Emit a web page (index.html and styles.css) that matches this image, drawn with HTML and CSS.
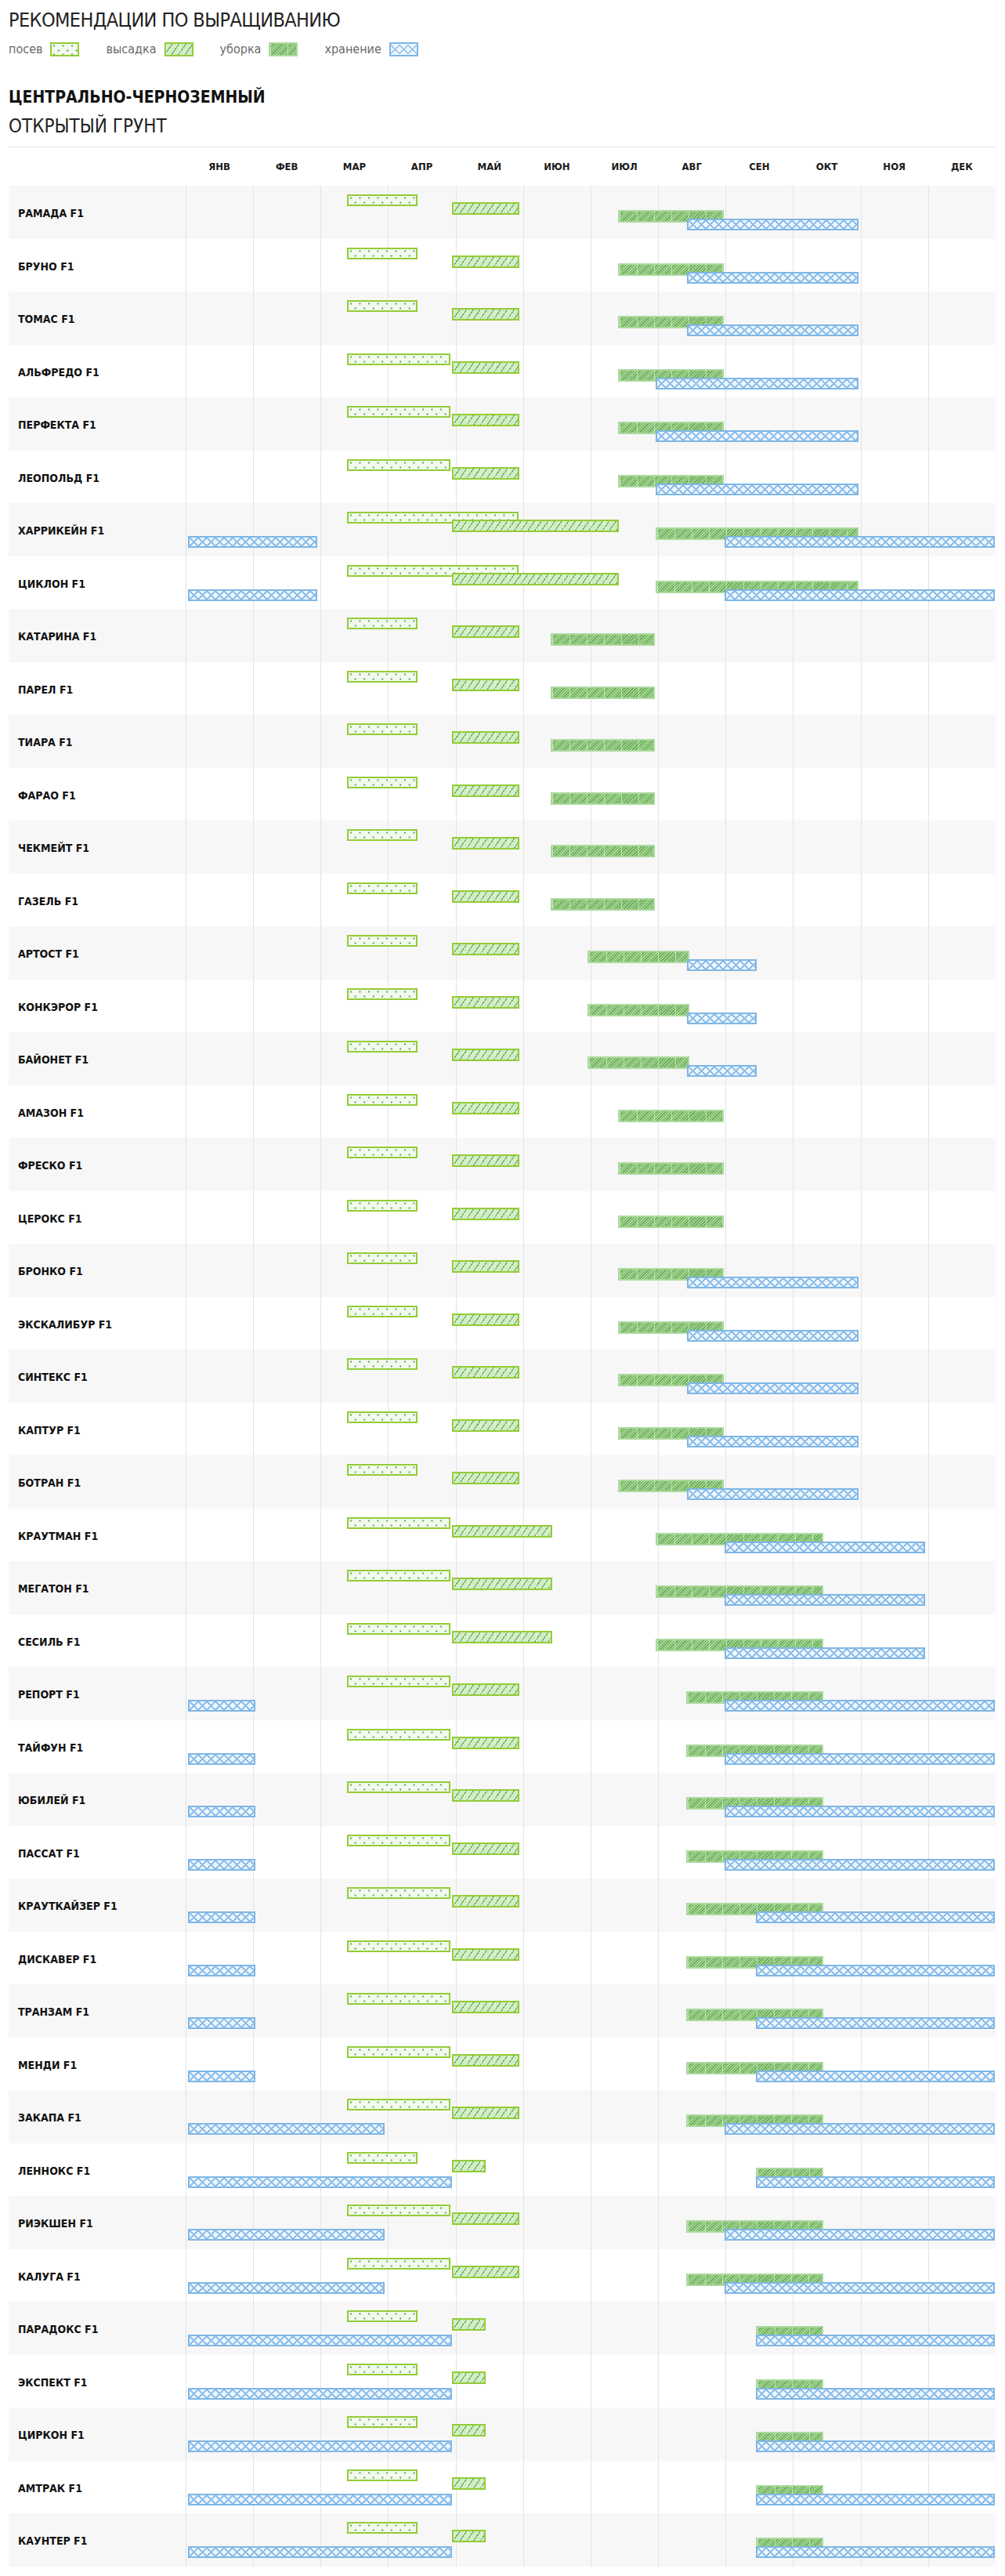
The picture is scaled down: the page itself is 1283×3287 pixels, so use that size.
FILE: index.html
```html
<!DOCTYPE html>
<html lang="ru">
<head>
<meta charset="utf-8">
<title>Рекомендации по выращиванию</title>
<link rel="stylesheet" href="styles.css">
</head>
<body>
<div class="page">
  <h1 class="title">РЕКОМЕНДАЦИИ ПО ВЫРАЩИВАНИЮ</h1>
  <div class="legend">
    <div class="legend-item"><span>посев</span><i class="swatch sow"></i></div>
    <div class="legend-item"><span>высадка</span><i class="swatch plant"></i></div>
    <div class="legend-item"><span>уборка</span><i class="swatch harvest"></i></div>
    <div class="legend-item"><span>хранение</span><i class="swatch store"></i></div>
  </div>
  <h2 class="region">ЦЕНТРАЛЬНО-ЧЕРНОЗЕМНЫЙ</h2>
  <h3 class="ground">ОТКРЫТЫЙ ГРУНТ</h3>
  <div class="divider"></div>

  <div class="months">
    <div class="spacer"></div>
    <div>ЯНВ</div><div>ФЕВ</div><div>МАР</div><div>АПР</div><div>МАЙ</div><div>ИЮН</div>
    <div>ИЮЛ</div><div>АВГ</div><div>СЕН</div><div>ОКТ</div><div>НОЯ</div><div>ДЕК</div>
  </div>

  <div class="chart">
    <div class="gridlines"><i></i><i></i><i></i><i></i><i></i><i></i><i></i><i></i><i></i><i></i><i></i><i></i></div>

    <div class="row"><div class="name">РАМАДА F1</div><div class="track">
      <b class="bar sow" style="left:19.95%;width:8.65%"></b>
      <b class="bar plant" style="left:32.91%;width:8.26%"></b>
      <b class="bar harvest" style="left:53.38%;width:13.06%"></b>
      <b class="bar store" style="left:61.9%;width:21.15%"></b>
    </div></div>
    <div class="row"><div class="name">БРУНО F1</div><div class="track">
      <b class="bar sow" style="left:19.95%;width:8.65%"></b>
      <b class="bar plant" style="left:32.91%;width:8.26%"></b>
      <b class="bar harvest" style="left:53.38%;width:13.06%"></b>
      <b class="bar store" style="left:61.9%;width:21.15%"></b>
    </div></div>
    <div class="row"><div class="name">ТОМАС F1</div><div class="track">
      <b class="bar sow" style="left:19.95%;width:8.65%"></b>
      <b class="bar plant" style="left:32.91%;width:8.26%"></b>
      <b class="bar harvest" style="left:53.38%;width:13.06%"></b>
      <b class="bar store" style="left:61.9%;width:21.15%"></b>
    </div></div>
    <div class="row"><div class="name">АЛЬФРЕДО F1</div><div class="track">
      <b class="bar sow" style="left:19.95%;width:12.72%"></b>
      <b class="bar plant" style="left:32.91%;width:8.26%"></b>
      <b class="bar harvest" style="left:53.38%;width:13.06%"></b>
      <b class="bar store" style="left:58%;width:25.05%"></b>
    </div></div>
    <div class="row"><div class="name">ПЕРФЕКТА F1</div><div class="track">
      <b class="bar sow" style="left:19.95%;width:12.72%"></b>
      <b class="bar plant" style="left:32.91%;width:8.26%"></b>
      <b class="bar harvest" style="left:53.38%;width:13.06%"></b>
      <b class="bar store" style="left:58%;width:25.05%"></b>
    </div></div>
    <div class="row"><div class="name">ЛЕОПОЛЬД F1</div><div class="track">
      <b class="bar sow" style="left:19.95%;width:12.72%"></b>
      <b class="bar plant" style="left:32.91%;width:8.26%"></b>
      <b class="bar harvest" style="left:53.38%;width:13.06%"></b>
      <b class="bar store" style="left:58%;width:25.05%"></b>
    </div></div>
    <div class="row"><div class="name">ХАРРИКЕЙН F1</div><div class="track">
      <b class="bar sow" style="left:19.95%;width:21.2%"></b>
      <b class="bar plant" style="left:32.91%;width:20.6%"></b>
      <b class="bar harvest" style="left:58%;width:25.05%"></b>
      <b class="bar store" style="left:0.33%;width:15.92%"></b>
      <b class="bar store" style="left:66.5%;width:33.4%"></b>
    </div></div>
    <div class="row"><div class="name">ЦИКЛОН F1</div><div class="track">
      <b class="bar sow" style="left:19.95%;width:21.2%"></b>
      <b class="bar plant" style="left:32.91%;width:20.6%"></b>
      <b class="bar harvest" style="left:58%;width:25.05%"></b>
      <b class="bar store" style="left:0.33%;width:15.92%"></b>
      <b class="bar store" style="left:66.5%;width:33.4%"></b>
    </div></div>
    <div class="row"><div class="name">КАТАРИНА F1</div><div class="track">
      <b class="bar sow" style="left:19.95%;width:8.65%"></b>
      <b class="bar plant" style="left:32.91%;width:8.26%"></b>
      <b class="bar harvest" style="left:45.08%;width:12.83%"></b>
    </div></div>
    <div class="row"><div class="name">ПАРЕЛ F1</div><div class="track">
      <b class="bar sow" style="left:19.95%;width:8.65%"></b>
      <b class="bar plant" style="left:32.91%;width:8.26%"></b>
      <b class="bar harvest" style="left:45.08%;width:12.83%"></b>
    </div></div>
    <div class="row"><div class="name">ТИАРА F1</div><div class="track">
      <b class="bar sow" style="left:19.95%;width:8.65%"></b>
      <b class="bar plant" style="left:32.91%;width:8.26%"></b>
      <b class="bar harvest" style="left:45.08%;width:12.83%"></b>
    </div></div>
    <div class="row"><div class="name">ФАРАО F1</div><div class="track">
      <b class="bar sow" style="left:19.95%;width:8.65%"></b>
      <b class="bar plant" style="left:32.91%;width:8.26%"></b>
      <b class="bar harvest" style="left:45.08%;width:12.83%"></b>
    </div></div>
    <div class="row"><div class="name">ЧЕКМЕЙТ F1</div><div class="track">
      <b class="bar sow" style="left:19.95%;width:8.65%"></b>
      <b class="bar plant" style="left:32.91%;width:8.26%"></b>
      <b class="bar harvest" style="left:45.08%;width:12.83%"></b>
    </div></div>
    <div class="row"><div class="name">ГАЗЕЛЬ F1</div><div class="track">
      <b class="bar sow" style="left:19.95%;width:8.65%"></b>
      <b class="bar plant" style="left:32.91%;width:8.26%"></b>
      <b class="bar harvest" style="left:45.08%;width:12.83%"></b>
    </div></div>
    <div class="row"><div class="name">АРТОСТ F1</div><div class="track">
      <b class="bar sow" style="left:19.95%;width:8.65%"></b>
      <b class="bar plant" style="left:32.91%;width:8.26%"></b>
      <b class="bar harvest" style="left:49.58%;width:12.58%"></b>
      <b class="bar store" style="left:61.9%;width:8.6%"></b>
    </div></div>
    <div class="row"><div class="name">КОНКЭРОР F1</div><div class="track">
      <b class="bar sow" style="left:19.95%;width:8.65%"></b>
      <b class="bar plant" style="left:32.91%;width:8.26%"></b>
      <b class="bar harvest" style="left:49.58%;width:12.58%"></b>
      <b class="bar store" style="left:61.9%;width:8.6%"></b>
    </div></div>
    <div class="row"><div class="name">БАЙОНЕТ F1</div><div class="track">
      <b class="bar sow" style="left:19.95%;width:8.65%"></b>
      <b class="bar plant" style="left:32.91%;width:8.26%"></b>
      <b class="bar harvest" style="left:49.58%;width:12.58%"></b>
      <b class="bar store" style="left:61.9%;width:8.6%"></b>
    </div></div>
    <div class="row"><div class="name">АМАЗОН F1</div><div class="track">
      <b class="bar sow" style="left:19.95%;width:8.65%"></b>
      <b class="bar plant" style="left:32.91%;width:8.26%"></b>
      <b class="bar harvest" style="left:53.38%;width:13.06%"></b>
    </div></div>
    <div class="row"><div class="name">ФРЕСКО F1</div><div class="track">
      <b class="bar sow" style="left:19.95%;width:8.65%"></b>
      <b class="bar plant" style="left:32.91%;width:8.26%"></b>
      <b class="bar harvest" style="left:53.38%;width:13.06%"></b>
    </div></div>
    <div class="row"><div class="name">ЦЕРОКС F1</div><div class="track">
      <b class="bar sow" style="left:19.95%;width:8.65%"></b>
      <b class="bar plant" style="left:32.91%;width:8.26%"></b>
      <b class="bar harvest" style="left:53.38%;width:13.06%"></b>
    </div></div>
    <div class="row"><div class="name">БРОНКО F1</div><div class="track">
      <b class="bar sow" style="left:19.95%;width:8.65%"></b>
      <b class="bar plant" style="left:32.91%;width:8.26%"></b>
      <b class="bar harvest" style="left:53.38%;width:13.06%"></b>
      <b class="bar store" style="left:61.9%;width:21.15%"></b>
    </div></div>
    <div class="row"><div class="name">ЭКСКАЛИБУР F1</div><div class="track">
      <b class="bar sow" style="left:19.95%;width:8.65%"></b>
      <b class="bar plant" style="left:32.91%;width:8.26%"></b>
      <b class="bar harvest" style="left:53.38%;width:13.06%"></b>
      <b class="bar store" style="left:61.9%;width:21.15%"></b>
    </div></div>
    <div class="row"><div class="name">СИНТЕКС F1</div><div class="track">
      <b class="bar sow" style="left:19.95%;width:8.65%"></b>
      <b class="bar plant" style="left:32.91%;width:8.26%"></b>
      <b class="bar harvest" style="left:53.38%;width:13.06%"></b>
      <b class="bar store" style="left:61.9%;width:21.15%"></b>
    </div></div>
    <div class="row"><div class="name">КАПТУР F1</div><div class="track">
      <b class="bar sow" style="left:19.95%;width:8.65%"></b>
      <b class="bar plant" style="left:32.91%;width:8.26%"></b>
      <b class="bar harvest" style="left:53.38%;width:13.06%"></b>
      <b class="bar store" style="left:61.9%;width:21.15%"></b>
    </div></div>
    <div class="row"><div class="name">БОТРАН F1</div><div class="track">
      <b class="bar sow" style="left:19.95%;width:8.65%"></b>
      <b class="bar plant" style="left:32.91%;width:8.26%"></b>
      <b class="bar harvest" style="left:53.38%;width:13.06%"></b>
      <b class="bar store" style="left:61.9%;width:21.15%"></b>
    </div></div>
    <div class="row"><div class="name">КРАУТМАН F1</div><div class="track">
      <b class="bar sow" style="left:19.95%;width:12.72%"></b>
      <b class="bar plant" style="left:32.91%;width:12.4%"></b>
      <b class="bar harvest" style="left:58%;width:20.75%"></b>
      <b class="bar store" style="left:66.5%;width:24.83%"></b>
    </div></div>
    <div class="row"><div class="name">МЕГАТОН F1</div><div class="track">
      <b class="bar sow" style="left:19.95%;width:12.72%"></b>
      <b class="bar plant" style="left:32.91%;width:12.4%"></b>
      <b class="bar harvest" style="left:58%;width:20.75%"></b>
      <b class="bar store" style="left:66.5%;width:24.83%"></b>
    </div></div>
    <div class="row"><div class="name">СЕСИЛЬ F1</div><div class="track">
      <b class="bar sow" style="left:19.95%;width:12.72%"></b>
      <b class="bar plant" style="left:32.91%;width:12.4%"></b>
      <b class="bar harvest" style="left:58%;width:20.75%"></b>
      <b class="bar store" style="left:66.5%;width:24.83%"></b>
    </div></div>
    <div class="row"><div class="name">РЕПОРТ F1</div><div class="track">
      <b class="bar sow" style="left:19.95%;width:12.72%"></b>
      <b class="bar plant" style="left:32.91%;width:8.26%"></b>
      <b class="bar harvest" style="left:61.83%;width:16.92%"></b>
      <b class="bar store" style="left:0.33%;width:8.25%"></b>
      <b class="bar store" style="left:66.5%;width:33.4%"></b>
    </div></div>
    <div class="row"><div class="name">ТАЙФУН F1</div><div class="track">
      <b class="bar sow" style="left:19.95%;width:12.72%"></b>
      <b class="bar plant" style="left:32.91%;width:8.26%"></b>
      <b class="bar harvest" style="left:61.83%;width:16.92%"></b>
      <b class="bar store" style="left:0.33%;width:8.25%"></b>
      <b class="bar store" style="left:66.5%;width:33.4%"></b>
    </div></div>
    <div class="row"><div class="name">ЮБИЛЕЙ F1</div><div class="track">
      <b class="bar sow" style="left:19.95%;width:12.72%"></b>
      <b class="bar plant" style="left:32.91%;width:8.26%"></b>
      <b class="bar harvest" style="left:61.83%;width:16.92%"></b>
      <b class="bar store" style="left:0.33%;width:8.25%"></b>
      <b class="bar store" style="left:66.5%;width:33.4%"></b>
    </div></div>
    <div class="row"><div class="name">ПАССАТ F1</div><div class="track">
      <b class="bar sow" style="left:19.95%;width:12.72%"></b>
      <b class="bar plant" style="left:32.91%;width:8.26%"></b>
      <b class="bar harvest" style="left:61.83%;width:16.92%"></b>
      <b class="bar store" style="left:0.33%;width:8.25%"></b>
      <b class="bar store" style="left:66.5%;width:33.4%"></b>
    </div></div>
    <div class="row"><div class="name">КРАУТКАЙЗЕР F1</div><div class="track">
      <b class="bar sow" style="left:19.95%;width:12.72%"></b>
      <b class="bar plant" style="left:32.91%;width:8.26%"></b>
      <b class="bar harvest" style="left:61.83%;width:16.92%"></b>
      <b class="bar store" style="left:0.33%;width:8.25%"></b>
      <b class="bar store" style="left:70.4%;width:29.5%"></b>
    </div></div>
    <div class="row"><div class="name">ДИСКАВЕР F1</div><div class="track">
      <b class="bar sow" style="left:19.95%;width:12.72%"></b>
      <b class="bar plant" style="left:32.91%;width:8.26%"></b>
      <b class="bar harvest" style="left:61.83%;width:16.92%"></b>
      <b class="bar store" style="left:0.33%;width:8.25%"></b>
      <b class="bar store" style="left:70.4%;width:29.5%"></b>
    </div></div>
    <div class="row"><div class="name">ТРАНЗАМ F1</div><div class="track">
      <b class="bar sow" style="left:19.95%;width:12.72%"></b>
      <b class="bar plant" style="left:32.91%;width:8.26%"></b>
      <b class="bar harvest" style="left:61.83%;width:16.92%"></b>
      <b class="bar store" style="left:0.33%;width:8.25%"></b>
      <b class="bar store" style="left:70.4%;width:29.5%"></b>
    </div></div>
    <div class="row"><div class="name">МЕНДИ F1</div><div class="track">
      <b class="bar sow" style="left:19.95%;width:12.72%"></b>
      <b class="bar plant" style="left:32.91%;width:8.26%"></b>
      <b class="bar harvest" style="left:61.83%;width:16.92%"></b>
      <b class="bar store" style="left:0.33%;width:8.25%"></b>
      <b class="bar store" style="left:70.4%;width:29.5%"></b>
    </div></div>
    <div class="row"><div class="name">ЗАКАПА F1</div><div class="track">
      <b class="bar sow" style="left:19.95%;width:12.72%"></b>
      <b class="bar plant" style="left:32.91%;width:8.26%"></b>
      <b class="bar harvest" style="left:61.83%;width:16.92%"></b>
      <b class="bar store" style="left:0.33%;width:24.25%"></b>
      <b class="bar store" style="left:66.5%;width:33.4%"></b>
    </div></div>
    <div class="row"><div class="name">ЛЕННОКС F1</div><div class="track">
      <b class="bar sow" style="left:19.95%;width:8.65%"></b>
      <b class="bar plant" style="left:32.91%;width:4.1%"></b>
      <b class="bar harvest" style="left:70.4%;width:8.35%"></b>
      <b class="bar store" style="left:0.33%;width:32.58%"></b>
      <b class="bar store" style="left:70.4%;width:29.5%"></b>
    </div></div>
    <div class="row"><div class="name">РИЭКШЕН F1</div><div class="track">
      <b class="bar sow" style="left:19.95%;width:12.72%"></b>
      <b class="bar plant" style="left:32.91%;width:8.26%"></b>
      <b class="bar harvest" style="left:61.83%;width:16.92%"></b>
      <b class="bar store" style="left:0.33%;width:24.25%"></b>
      <b class="bar store" style="left:66.5%;width:33.4%"></b>
    </div></div>
    <div class="row"><div class="name">КАЛУГА F1</div><div class="track">
      <b class="bar sow" style="left:19.95%;width:12.72%"></b>
      <b class="bar plant" style="left:32.91%;width:8.26%"></b>
      <b class="bar harvest" style="left:61.83%;width:16.92%"></b>
      <b class="bar store" style="left:0.33%;width:24.25%"></b>
      <b class="bar store" style="left:66.5%;width:33.4%"></b>
    </div></div>
    <div class="row"><div class="name">ПАРАДОКС F1</div><div class="track">
      <b class="bar sow" style="left:19.95%;width:8.65%"></b>
      <b class="bar plant" style="left:32.91%;width:4.1%"></b>
      <b class="bar harvest" style="left:70.4%;width:8.35%"></b>
      <b class="bar store" style="left:0.33%;width:32.58%"></b>
      <b class="bar store" style="left:70.4%;width:29.5%"></b>
    </div></div>
    <div class="row"><div class="name">ЭКСПЕКТ F1</div><div class="track">
      <b class="bar sow" style="left:19.95%;width:8.65%"></b>
      <b class="bar plant" style="left:32.91%;width:4.1%"></b>
      <b class="bar harvest" style="left:70.4%;width:8.35%"></b>
      <b class="bar store" style="left:0.33%;width:32.58%"></b>
      <b class="bar store" style="left:70.4%;width:29.5%"></b>
    </div></div>
    <div class="row"><div class="name">ЦИРКОН F1</div><div class="track">
      <b class="bar sow" style="left:19.95%;width:8.65%"></b>
      <b class="bar plant" style="left:32.91%;width:4.1%"></b>
      <b class="bar harvest" style="left:70.4%;width:8.35%"></b>
      <b class="bar store" style="left:0.33%;width:32.58%"></b>
      <b class="bar store" style="left:70.4%;width:29.5%"></b>
    </div></div>
    <div class="row"><div class="name">АМТРАК F1</div><div class="track">
      <b class="bar sow" style="left:19.95%;width:8.65%"></b>
      <b class="bar plant" style="left:32.91%;width:4.1%"></b>
      <b class="bar harvest" style="left:70.4%;width:8.35%"></b>
      <b class="bar store" style="left:0.33%;width:32.58%"></b>
      <b class="bar store" style="left:70.4%;width:29.5%"></b>
    </div></div>
    <div class="row"><div class="name">КАУНТЕР F1</div><div class="track">
      <b class="bar sow" style="left:19.95%;width:8.65%"></b>
      <b class="bar plant" style="left:32.91%;width:4.1%"></b>
      <b class="bar harvest" style="left:70.4%;width:8.35%"></b>
      <b class="bar store" style="left:0.33%;width:32.58%"></b>
      <b class="bar store" style="left:70.4%;width:29.5%"></b>
    </div></div>
  </div>
</div>
</body>
</html>
```
FILE: styles.css
```css
* { box-sizing: border-box; }

html, body {
  margin: 0;
  padding: 0;
  background: #ffffff;
}

body {
  font-family: "DejaVu Sans Condensed", "DejaVu Sans", "Liberation Sans", sans-serif;
  font-stretch: condensed;
  color: #1e1e1e;
}

.page {
  width: 1260px;
  margin-left: 11px;
}

.title {
  margin: 11px 0 0 0;
  font-size: 25px;
  line-height: 30px;
  letter-spacing: -0.6px;
  font-weight: normal;
  color: #222222;
}

.legend {
  display: flex;
  gap: 34px;
  margin-top: 12px;
  height: 20px;
  align-items: center;
}

.legend-item {
  display: flex;
  align-items: center;
  gap: 10px;
  font-size: 16px;
  line-height: 20px;
  color: #6a6a6a;
}

.swatch {
  display: block;
  width: 37px;
  height: 18px;
}

.region {
  margin: 39px 0 0 0;
  font-size: 21px;
  line-height: 24px;
  font-weight: bold;
  color: #111111;
}

.ground {
  margin: 11px 0 0 0;
  font-size: 24px;
  line-height: 28px;
  font-weight: normal;
  color: #222222;
}

.divider {
  margin-top: 12px;
  height: 1px;
  background: #e6e6e6;
}

.months {
  display: grid;
  grid-template-columns: 226px repeat(12, 1fr);
  height: 49px;
  align-items: center;
  text-align: center;
  font-size: 13px;
  font-weight: bold;
  color: #1a1a1a;
}

.chart {
  position: relative;
}

.gridlines {
  position: absolute;
  top: 0;
  bottom: 0;
  left: 226px;
  right: 0;
  display: grid;
  grid-template-columns: repeat(12, 1fr);
  z-index: 1;
  pointer-events: none;
}

.gridlines i {
  border-left: 1px solid #e3e3e3;
}

.row {
  display: flex;
  height: 67.5px;
}

.row:nth-child(even) {
  background: #f7f7f7;
}

.name {
  width: 226px;
  flex: none;
  display: flex;
  align-items: center;
  padding: 3px 0 0 12px;
  font-size: 14px;
  font-weight: bold;
  color: #111111;
}

.track {
  flex: 1;
  position: relative;
}

.bar {
  position: absolute;
  display: block;
  z-index: 2;
}

.bar.sow { top: 11px; height: 15px; }
.bar.plant { top: 21px; height: 16px; }
.bar.harvest { top: 31px; height: 16px; }
.bar.store { top: 42px; height: 15px; }

/* посев */
.sow {
  border: 2px solid #93cc36;
  background-color: #f3f9ef;
  background-image:
    radial-gradient(circle at 3px 2.5px, #55b450 0, #55b450 0.9px, transparent 1.4px),
    radial-gradient(circle at 8.75px 8.5px, #55b450 0, #55b450 0.9px, transparent 1.4px);
  background-size: 11.5px 11px;
}

/* высадка */
.plant {
  border: 2px solid #93cc36;
  background-color: #d4ebc6;
  background-image:
    linear-gradient(90deg, rgba(255,255,255,0.55) 0, rgba(255,255,255,0.55) 1px, transparent 1px),
    repeating-linear-gradient(125deg, transparent 0, transparent 6px, #55b450 6px, #55b450 7.1px);
  background-size: 17.5px 100%, auto;
}

/* уборка */
.harvest {
  border: 2px solid #acd99e;
  background-color: #94cd80;
  background-image:
    linear-gradient(90deg, rgba(255,255,255,0.5) 0, rgba(255,255,255,0.5) 1px, transparent 1px),
    repeating-linear-gradient(135deg, #64a656 0, #64a656 1px, #a3d690 1px, #a3d690 2.6px);
  background-size: 22px 100%, auto;
}

/* хранение */
.store {
  border: 2px solid #7fb6e6;
  background-color: #eef6fd;
  background-image:
    linear-gradient(45deg, transparent 45%, #8ebfea 45%, #8ebfea 55%, transparent 55%),
    linear-gradient(-45deg, transparent 45%, #8ebfea 45%, #8ebfea 55%, transparent 55%);
  background-size: 11px 11px;
}

.swatch.store { background-size: 11px 14px; }
```
